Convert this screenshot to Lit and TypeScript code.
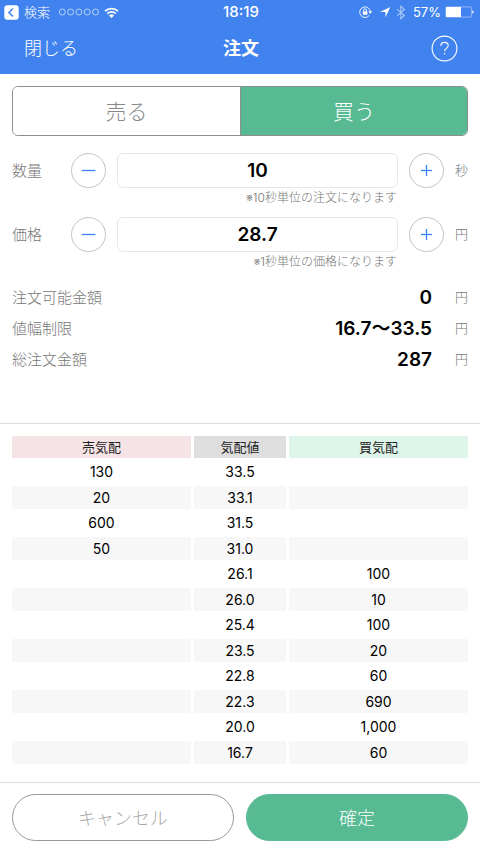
import { LitElement, html, css, svg, nothing } from "lit";
import { customElement, state } from "lit/decorators.js";
import { classMap } from "lit/directives/class-map.js";

interface Quote {
  sell: string;
  price: string;
  buy: string;
}

const quotes: Quote[] = [
  { sell: "130", price: "33.5", buy: "" },
  { sell: "20", price: "33.1", buy: "" },
  { sell: "600", price: "31.5", buy: "" },
  { sell: "50", price: "31.0", buy: "" },
  { sell: "", price: "26.1", buy: "100" },
  { sell: "", price: "26.0", buy: "10" },
  { sell: "", price: "25.4", buy: "100" },
  { sell: "", price: "23.5", buy: "20" },
  { sell: "", price: "22.8", buy: "60" },
  { sell: "", price: "22.3", buy: "690" },
  { sell: "", price: "20.0", buy: "1,000" },
  { sell: "", price: "16.7", buy: "60" },
];

const summary = [
  { label: "注文可能金額", value: "0" },
  { label: "値幅制限", value: "16.7〜33.5" },
  { label: "総注文金額", value: "287" },
];

@customElement("app-root")
export class AppRoot extends LitElement {
  @state() private side: "sell" | "buy" = "buy";
  @state() private amount = 10;
  @state() private price = 28.7;

  static styles = css`
    :host {
      display: flex;
      flex-direction: column;
      min-height: 100vh;
      background: #fff;
      color: #000;
      font-family: Inter, "Noto Sans CJK JP", sans-serif;
      font-size: 15px;
    }
    * {
      box-sizing: border-box;
    }
    button,
    input {
      font: inherit;
      margin: 0;
      padding: 0;
    }
    button {
      cursor: pointer;
    }
    header {
      background: #4183ee;
      color: #fff;
      height: 74px;
    }
    .status,
    .nav {
      display: grid;
      grid-template-columns: 1fr auto 1fr;
      align-items: center;
    }
    .status {
      height: 24px;
      padding: 0 6px 0 4px;
      font-size: 13px;
      line-height: 24px;
    }
    .status-left,
    .status-right {
      display: flex;
      align-items: center;
    }
    .status-left {
      font-weight: 300;
      gap: 5px;
    }
    .status-right {
      justify-content: flex-end;
      gap: 4px;
    }
    .clock {
      padding-left: 4px;
      font-size: 15px;
      font-weight: 500;
    }
    .signal {
      margin-left: 4px;
    }
    .percent {
      margin-left: 3px;
    }
    svg {
      display: block;
      flex: none;
    }
    .nav {
      height: 48px;
      padding: 0 22px 0 24px;
    }
    .nav h1 {
      margin: 0;
      padding-top: 2px;
      font-size: 18px;
      line-height: 26px;
      font-weight: 700;
    }
    .close,
    .help {
      background: none;
      border: 0;
      color: inherit;
    }
    .close {
      justify-self: start;
      padding-top: 2px;
      font-size: 18px;
      line-height: 26px;
      font-weight: 300;
    }
    .help {
      justify-self: end;
    }
    .sides {
      display: grid;
      grid-template-columns: 1fr 1fr;
      height: 50px;
      margin: 12px 12px 17px;
      border: 1px solid #8e8e8e;
      border-radius: 6px;
      overflow: hidden;
    }
    .side {
      padding-bottom: 2px;
      border: 0;
      background: #fff;
      color: #888;
      font-size: 21px;
      font-weight: 300;
    }
    .side + .side {
      border-left: 1px solid #8e8e8e;
    }
    .side.on {
      background: #57ba93;
      color: #fff;
    }
    .field {
      display: grid;
      grid-template-columns: 48px 35px 1fr 35px 13px;
      column-gap: 11px;
      align-items: center;
      padding: 0 12px;
    }
    .label {
      padding-bottom: 2px;
      color: #777;
      font-weight: 300;
      white-space: nowrap;
    }
    .unit {
      padding-bottom: 2px;
      color: #777;
      font-size: 13px;
      font-weight: 300;
    }
    .step {
      display: grid;
      place-items: center;
      width: 35px;
      height: 35px;
      border: 1px solid #c4c4c4;
      border-radius: 50%;
      background: #fff;
    }
    .value {
      width: 100%;
      min-width: 0;
      height: 35px;
      border: 1px solid #e8e8e8;
      border-radius: 6px;
      text-align: center;
      font-size: 19px;
      font-weight: 600;
      color: #000;
    }
    .hint {
      margin: 1px 83px 10px 12px;
      color: #777;
      font-size: 12px;
      line-height: 18px;
      font-weight: 300;
      text-align: right;
    }
    .summary {
      margin: 0;
      padding: 1px 12px 48px;
      border-bottom: 1px solid #dcdcdc;
    }
    .line {
      display: grid;
      grid-template-columns: auto 1fr 13px;
      align-items: center;
      height: 31px;
    }
    .line dd {
      margin: 0;
    }
    .total {
      padding-right: 23px;
      text-align: right;
      font-size: 19px;
      line-height: 31px;
      font-weight: 600;
    }
    .board {
      padding: 10px 9px 14px;
    }
    table {
      width: 100%;
      table-layout: fixed;
      border-collapse: separate;
      border-spacing: 3px 2px;
      text-align: center;
      font-size: 14px;
      line-height: 22px;
    }
    th,
    td {
      padding: 0;
      font-weight: 400;
    }
    th {
      height: 22px;
      font-size: 13px;
      color: #222;
    }
    td {
      height: 24px;
    }
    tbody tr:nth-child(even) td {
      height: 23px;
      background: #f7f7f7;
    }
    .mid {
      width: 92px;
      background: #dedede;
    }
    .sell-head {
      background: #f6e3e5;
    }
    .buy-head {
      background: #def5ea;
    }
    footer {
      display: grid;
      grid-template-columns: 1fr 1fr;
      gap: 12px;
      margin-top: auto;
      padding: 11px 12px 12px;
      border-top: 1px solid #dcdcdc;
    }
    .action {
      height: 47px;
      padding-bottom: 2px;
      border: 1px solid #999;
      border-radius: 24px;
      background: #fff;
      color: #aaa;
      font-size: 18px;
      font-weight: 300;
    }
    .action.primary {
      border-color: #57ba93;
      background: #57ba93;
      color: #fff;
    }
  `;

  private stepIcon(plus: boolean) {
    return html`<svg width="15" height="15" viewBox="0 0 15 15" fill="none" stroke="#3b82f6" stroke-width="1.3" aria-hidden="true">
      <path d=${plus ? "M2 7.5h11" : "M.7 7.5h13.6"} />
      ${plus ? svg`<path d="M7.5 2v11" />` : nothing}
    </svg>`;
  }

  private field(id: string, label: string, value: number, unit: string, hint: string, change: (by: number) => void) {
    return html`
      <div class="field">
        <label class="label" for=${id}>${label}</label>
        <button class="step" aria-label="${label}を減らす" @click=${() => change(-1)}>${this.stepIcon(false)}</button>
        <input class="value" id=${id} type="text" inputmode="decimal" .value=${String(value)} />
        <button class="step" aria-label="${label}を増やす" @click=${() => change(1)}>${this.stepIcon(true)}</button>
        <span class="unit">${unit}</span>
      </div>
      <p class="hint">${hint}</p>
    `;
  }

  private statusBar() {
    return html`
      <div class="status">
        <div class="status-left">
          <svg width="15" height="15" viewBox="0 0 15 15" aria-hidden="true">
            <rect x=".3" y=".3" width="14.4" height="14.4" rx="3" fill="#fff" />
            <path d="M9 3.5 5 7.5l4 4" fill="none" stroke="#4183ee" stroke-width="1.6" />
          </svg>
          <span>検索</span>
          <svg class="signal" width="40" height="8" viewBox="0 0 40 8" fill="none" stroke="#fff" stroke-width=".6" aria-hidden="true">
            ${[3.3, 11.6, 19.9, 28.2, 36.5].map((x) => svg`<circle cx=${x} cy="4" r="3" />`)}
          </svg>
          <svg width="15" height="11" viewBox="0 0 15 11" fill="none" stroke="#fff" stroke-width="1.7" aria-hidden="true">
            <path d="M1 4.2a9.3 9.3 0 0 1 13 0M3.3 6.6a6 6 0 0 1 8.4 0" />
            <path d="M5 8.4a3.6 3.6 0 0 1 5 0L7.5 11z" fill="#fff" stroke="none" />
          </svg>
        </div>
        <span class="clock">18:19</span>
        <div class="status-right">
          <svg width="14" height="12" viewBox="0 0 14 12" fill="none" stroke="#fff" aria-hidden="true">
            <path d="M10.4 9.2A5.3 5.3 0 1 1 11.3 5.6" stroke-width=".9" />
            <path d="M9.2 5.2h4.2l-2.1 2.6z" fill="#fff" stroke="none" />
            <rect x="3.8" y="5.2" width="4.6" height="3.6" rx=".4" fill="#fff" stroke="none" />
            <path d="M4.7 5.4V4.2a1.4 1.4 0 0 1 2.8 0v1.2" stroke-width=".9" />
          </svg>
          <svg width="15" height="12" viewBox="0 0 15 12" aria-hidden="true">
            <path d="M13.3 1 8.5 11.2V6.1H3z" fill="#fff" />
          </svg>
          <svg width="10" height="15" viewBox="0 0 10 15" fill="none" stroke="#fff" stroke-opacity=".55" stroke-width="1.1" aria-hidden="true">
            <path d="M1 4.2l7.4 6.3-3.6 3.3V1.2l3.6 3.3L1 10.8" />
          </svg>
          <span class="percent">57%</span>
          <svg width="29" height="12" viewBox="0 0 29 12" aria-hidden="true">
            <rect x=".9" y=".9" width="25.4" height="10.2" rx="1" fill="none" stroke="#fff" stroke-opacity=".55" stroke-width=".8" />
            <rect x="1" y="1" width="15" height="10" fill="#fff" />
            <path d="M27.3 4.2q1.4.4 1.4 1.8t-1.4 1.8z" fill="#fff" />
          </svg>
        </div>
      </div>
    `;
  }

  render() {
    return html`
      <header>
        ${this.statusBar()}
        <nav class="nav">
          <button class="close">閉じる</button>
          <h1>注文</h1>
          <button class="help" aria-label="ヘルプ">
            <svg width="27" height="27" viewBox="0 0 27 27" fill="none" stroke="#fff" aria-hidden="true">
              <circle cx="13.5" cy="13.5" r="12.4" stroke-width="1.1" />
              <path d="M9.8 11.1c0-2.3 1.5-3.7 3.7-3.7s3.7 1.3 3.7 3.2c0 2.7-3.6 2.9-3.6 5.6" stroke-width="1.1" />
              <circle cx="13.6" cy="18.7" r=".8" fill="#fff" stroke="none" />
            </svg>
          </button>
        </nav>
      </header>
      <main>
        <div class="sides">
          <button class=${classMap({ side: true, on: this.side === "sell" })} @click=${() => (this.side = "sell")}>売る</button>
          <button class=${classMap({ side: true, on: this.side === "buy" })} @click=${() => (this.side = "buy")}>買う</button>
        </div>
        ${this.field("amount", "数量", this.amount, "秒", "※10秒単位の注文になります", (by) => {
          this.amount = Math.max(0, this.amount + by * 10);
        })}
        ${this.field("price", "価格", this.price, "円", "※1秒単位の価格になります", (by) => {
          this.price = Math.round((this.price + by * 0.1) * 10) / 10;
        })}
        <dl class="summary">
          ${summary.map(
            (row) => html`<div class="line">
              <dt class="label">${row.label}</dt>
              <dd class="total">${row.value}</dd>
              <dd class="unit">円</dd>
            </div>`
          )}
        </dl>
        <div class="board">
          <table>
            <thead>
              <tr>
                <th class="sell-head" scope="col">売気配</th>
                <th class="mid" scope="col">気配値</th>
                <th class="buy-head" scope="col">買気配</th>
              </tr>
            </thead>
            <tbody>
              ${quotes.map(
                (q) => html`<tr>
                  <td>${q.sell}</td>
                  <td>${q.price}</td>
                  <td>${q.buy}</td>
                </tr>`
              )}
            </tbody>
          </table>
        </div>
      </main>
      <footer>
        <button class="action">キャンセル</button>
        <button class="action primary">確定</button>
      </footer>
    `;
  }
}
